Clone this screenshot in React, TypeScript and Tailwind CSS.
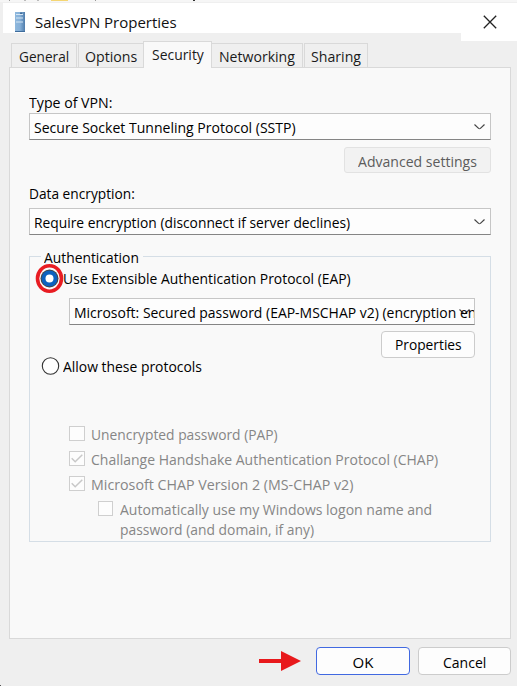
import { useLayoutEffect, useRef, useState } from "react";
import type { ReactNode } from "react";

// Single line of text condensed to the given width.
function Fit({ w, children }: { w: number; children: string }) {
  const ref = useRef<HTMLSpanElement>(null);
  const [scale, setScale] = useState(1);
  useLayoutEffect(() => {
    if (ref.current) setScale(w / ref.current.offsetWidth);
  }, [w, children]);
  return (
    <span className="block h-5 shrink-0" style={{ width: w }}>
      <span
        ref={ref}
        className="block w-max origin-left whitespace-nowrap leading-5"
        style={{ transform: `scaleX(${scale})` }}
      >
        {children}
      </span>
    </span>
  );
}

function Chevron() {
  return (
    <svg className="h-[6px] w-[11px] shrink-0" viewBox="0 0 11 6" fill="none" stroke="#444" strokeWidth="1.2">
      <path d="M.5 .5 4.6 4.4Q5.5 5.1 6.4 4.4L10.5 .5" />
    </svg>
  );
}

function Select({ w, children }: { w: number; children: string }) {
  return (
    <div className="flex h-[27px] items-center justify-between border border-[#c6c6c6] border-b-[#858585] bg-[#fdfdfd] pl-1 pr-[5px]">
      <div className="pt-px">
        <Fit w={w}>{children}</Fit>
      </div>
      <Chevron />
    </div>
  );
}

function Check({ checked = false, className = "w-4" }: { checked?: boolean; className?: string }) {
  return (
    <span className={`flex h-[15px] shrink-0 items-center justify-center border border-[#cfcfcf] bg-[#fdfdfd] ${className}`}>
      {checked && (
        <svg className="h-[9px] w-3" viewBox="0 0 12 9" fill="none" stroke="#c8c8c8" strokeWidth="1.5">
          <path d="M.7 4.2 4.2 7.8 11.3 .7" />
        </svg>
      )}
    </span>
  );
}

function Tab({ className, children }: { className: string; children: ReactNode }) {
  return <div className={`flex justify-center border-[#d9d9d9] ${className}`}>{children}</div>;
}

export default function App() {
  return (
    <div className="flex h-[686px] w-[517px] flex-col overflow-hidden bg-[#efefef] font-['Open_Sans','Noto_Sans',sans-serif] text-[15px] text-black">
      <div className="flex h-[3px] shrink-0 items-start border-b border-[#efefef] bg-[#f6f6f6]">
        <div className="ml-[9px] h-px w-px bg-[#999]" />
        <div className="ml-[14px] h-px w-[2px] bg-[#bbb]" />
        <div className="ml-[11px] h-px w-[2px] bg-[#bbb]" />
        <div className="ml-[12px] h-px w-[17px] bg-[#f5d673]" />
        <div className="ml-[27px] h-px w-px bg-[#999]" />
        <div className="ml-[97px] h-px w-[2px] bg-[#333]" />
      </div>
      <header className="ml-[3px] flex h-[38px] shrink-0 items-start">
        <div className="flex h-[30px] flex-1 items-start bg-white pl-3">
          <svg className="mt-[9px] h-5 w-[10px]" viewBox="0 0 10 20">
            <defs>
              <linearGradient id="tower">
                <stop stopColor="#8fb8dd" />
                <stop offset=".5" stopColor="#86b0d8" />
                <stop offset="1" stopColor="#4f7cab" />
              </linearGradient>
            </defs>
            <rect width="10" height="20" fill="url(#tower)" />
            <path d="M1 2.5h7M1 6h7M1 10h7" stroke="#d4e6f5" />
            <path d="M5 1.2h2" stroke="#295483" />
            <path d="M0 19.5h10" stroke="#3e6c9c" />
          </svg>
          <div className="ml-[10px] mt-[9px] text-[#111]">
            <Fit w={142}>SalesVPN Properties</Fit>
          </div>
        </div>
        <div className="flex h-[38px] w-14 justify-center bg-white pl-[2px] pt-[12px]">
          <svg className="h-[14px] w-[14px]" viewBox="0 0 14 14" stroke="#222" strokeWidth="1.3">
            <path d="M.8 .8 13.2 13.2M13.2 .8 .8 13.2" />
          </svg>
        </div>
      </header>

      <nav className="relative z-10 -mb-px ml-[11px] flex h-[27px] shrink-0 items-start text-[#1a1a1a]">
        <Tab className="mr-px mt-[2px] h-6 w-[66px] border-x border-t pt-[2px]"><Fit w={50}>General</Fit></Tab>
        <Tab className="mt-[2px] h-6 w-[65px] border-l border-t pr-px pt-[2px]"><Fit w={52}>Options</Fit></Tab>
        <Tab className="h-[27px] w-[69px] border-x border-t bg-[#f9f9f9] pl-px pt-[2px]"><Fit w={52}>Security</Fit></Tab>
        <Tab className="mr-px mt-[2px] h-6 w-[91px] border-r border-t pt-[2px]"><Fit w={76}>Networking</Fit></Tab>
        <Tab className="mt-[2px] h-6 w-16 border-x border-t pt-[2px]"><Fit w={50}>Sharing</Fit></Tab>
      </nav>

      <main className="ml-[9px] flex h-[572px] w-[502px] shrink-0 flex-col border border-[#d9d9d9] bg-[#f9f9f9] px-[19px] pt-6">
        <Fit w={83}>Type of VPN:</Fit>
        <div className="mt-px"><Select w={262}>Secure Socket Tunneling Protocol (SSTP)</Select></div>
        <button className="ml-auto mt-[7px] flex h-[26px] w-[147px] justify-center rounded-[3px] border border-[#e2e2e2] bg-[#f2f2f2] pt-[3px] text-[#5c5c5c]">
          <Fit w={119}>Advanced settings</Fit>
        </button>
        <div className="mt-[10px]"><Fit w={106}>Data encryption:</Fit></div>
        <div className="mt-[5px]"><Select w={316}>Require encryption (disconnect if server declines)</Select></div>

        <section className="relative mt-[21px] h-[286px] border border-[#d5dee6]">
          <div className="absolute -top-[10px] left-[11px] h-5 w-[102px] bg-[#f9f9f9] pl-[3px]">
            <Fit w={95}>Authentication</Fit>
          </div>
          <label className="relative flex h-[31px] items-start pl-[5px] pt-[6px]">
            <svg className="h-[31px] w-[29px] shrink-0" viewBox="0 0 29 31">
              <circle cx="14.5" cy="15.5" r="9" fill="#444" />
              <circle cx="14.5" cy="15.5" r="8" fill="#0b61bf" />
              <circle cx="14.5" cy="15.5" r="4" fill="#fff" />
              <ellipse cx="14.5" cy="15.5" rx="12" ry="12.7" fill="none" stroke="#e81c22" strokeWidth="3.6" />
            </svg>
            <span className="-ml-px mt-[5px]"><Fit w={288}>Use Extensible Authentication Protocol (EAP)</Fit></span>
          </label>
          <div className="ml-[39px] mt-[10px] flex h-[27px] w-[406px] items-center overflow-hidden border border-[#c6c6c6] border-b-[#858585] bg-[#fdfdfd] pl-1">
            <div className="w-[385px] shrink-0 pt-px"><Fit w={402}>Microsoft: Secured password (EAP-MSCHAP v2) (encryption en</Fit></div>
            <Chevron />
          </div>
          <button className="ml-[351px] mt-[6px] flex h-[27px] w-[94px] justify-center rounded-[4px] border border-[#cccccc] bg-[#fdfdfd] pt-[2px]">
            <Fit w={67}>Properties</Fit>
          </button>
          <label className="-mt-[2px] flex pl-[11px]">
            <svg className="h-5 w-[19px] shrink-0" viewBox="0 0 19 20">
              <circle cx="9.5" cy="10" r="8.2" fill="#fff" stroke="#333" strokeWidth="1.1" />
            </svg>
            <span className="ml-[3px]"><Fit w={139}>Allow these protocols</Fit></span>
          </label>
          <div className="ml-[39px] mt-[48px] flex flex-col gap-[5px] text-[#868686]">
            <label className="flex h-5 gap-[6px]"><span className="mt-[2px]"><Check /></span><Fit w={187}>Unencrypted password (PAP)</Fit></label>
            <label className="flex h-5 gap-[6px]"><span className="mt-[2px]"><Check checked /></span><Fit w={347}>Challange Handshake Authentication Protocol (CHAP)</Fit></label>
            <label className="flex h-5 gap-[6px]"><span className="mt-[2px]"><Check checked /></span><Fit w={262}>Microsoft CHAP Version 2 (MS-CHAP v2)</Fit></label>
            <label className="ml-[29px] flex h-10 gap-[7px]">
              <span className="mt-[2px]"><Check className="w-[15px]" /></span>
              <span>
                <Fit w={312}>Automatically use my Windows logon name and</Fit>
                <Fit w={194}>password (and domain, if any)</Fit>
              </span>
            </label>
          </div>
        </section>
      </main>

      <footer className="flex flex-1 items-start pt-2">
        <div className="h-px w-px self-end bg-[#555]" />
        <svg className="ml-[258px] mt-1 h-5 w-[42px]" viewBox="0 0 42 20" fill="#e8191c">
          <path d="M0 8h22V0L42 10 22 20V12H0z" />
        </svg>
        <button className="ml-[15px] flex h-7 w-[94px] justify-center rounded-[4px] border border-[#4169e1] bg-[#fdfdfd] pt-1"><Fit w={21}>OK</Fit></button>
        <button className="ml-2 flex h-7 w-[93px] justify-center rounded-[4px] border border-[#cccccc] bg-[#fdfdfd] pt-1"><Fit w={43}>Cancel</Fit></button>
      </footer>
    </div>
  );
}
